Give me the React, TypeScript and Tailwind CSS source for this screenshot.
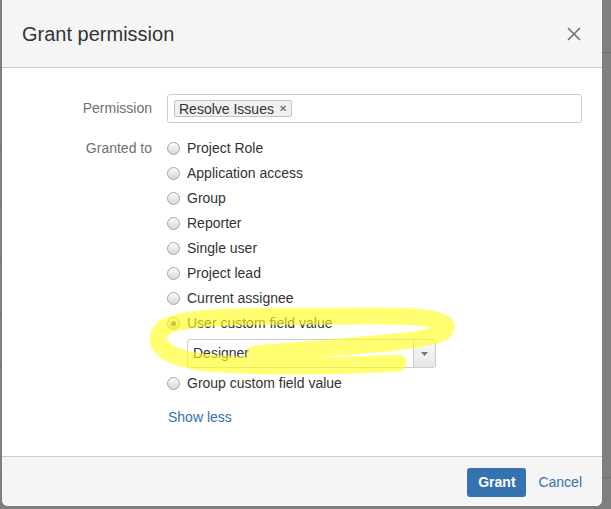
import React from 'react'

const OPTIONS = [
  'Project Role',
  'Application access',
  'Group',
  'Reporter',
  'Single user',
  'Project lead',
  'Current assignee',
]

function Radio({ checked = false }: { checked?: boolean }) {
  return (
    <span className="flex h-[13px] w-[13px] flex-shrink-0 items-center justify-center rounded-full border border-[#a6a6a6] bg-gradient-to-b from-[#fdfdfd] to-[#d6d6d6]">
      {checked ? <span className="h-[5px] w-[5px] rounded-full bg-[#6b6b6b]" /> : null}
    </span>
  )
}

function RadioRow({ label, checked }: { label: string; checked?: boolean }) {
  return (
    <label className="flex h-[25px] items-center gap-[7px] text-[14px] text-[#333]">
      <Radio checked={checked} />
      <span>{label}</span>
    </label>
  )
}

export default function App() {
  return (
    <div className="relative h-[509px] w-[611px] overflow-hidden bg-[#7f7f7f] font-['Liberation_Sans',Arial,sans-serif]">
      {/* table rows behind the backdrop */}
      {[147, 202, 257, 312, 367, 477].map((y) => (
        <div key={y} className="absolute left-0 h-px w-[2px] bg-[#6e6e6e]" style={{ top: y }} />
      ))}
      {[52, 477].map((y) => (
        <div key={y} className="absolute right-0 h-px w-[9px] bg-[#6e6e6e]" style={{ top: y }} />
      ))}

      <div className="ml-[2px] mt-[-4px] flex w-[600px] flex-col overflow-hidden rounded-md bg-white">
        {/* header */}
        <div className="flex h-[72px] items-center justify-between border-b border-[#cccccc] bg-[#f5f5f5] pl-[20px] pr-[21px] pt-[4px]">
          <h2 className="text-[20px] leading-none text-[#333]">Grant permission</h2>
          <svg width="14" height="14" viewBox="0 0 14 14" className="text-[#707070]">
            <path d="M1 1 L13 13 M13 1 L1 13" stroke="currentColor" strokeWidth="1.6" fill="none" />
          </svg>
        </div>

        {/* body */}
        <div className="flex h-[388px] flex-col px-[20px] pt-[26px] text-[14px]">
          <div className="flex items-center gap-[15px]">
            <span className="w-[130px] text-right text-[#707070]">Permission</span>
            <div className="flex h-[29px] flex-1 items-center rounded-[3px] border border-[#cccccc] px-[6px]">
              <span className="flex h-[17px] items-center gap-[5px] rounded-[2px] border border-[#c4c4c4] bg-[#f0f0f0] pl-[4px] pr-[4px] leading-none text-[#333]">
                Resolve Issues
                <span className="text-[10px] text-[#555]">✕</span>
              </span>
            </div>
          </div>

          <div className="mt-[13px] flex gap-[15px]">
            <span className="w-[130px] text-right leading-[25px] text-[#707070]">Granted to</span>
            <div className="flex flex-col">
              {OPTIONS.map((o) => (
                <RadioRow key={o} label={o} />
              ))}
              <RadioRow label="User custom field value" checked />
              <div className="ml-[20px] mt-[3px] flex h-[29px] w-[249px] overflow-hidden rounded-[3px] border border-[#cccccc]">
                <span className="flex flex-1 items-center pl-[5px] text-[#333]">Designer</span>
                <span className="flex w-[22px] items-center justify-center border-l border-[#cccccc] bg-gradient-to-b from-[#fafafa] to-[#e6e6e6]">
                  <svg width="7" height="4" viewBox="0 0 7 4">
                    <path d="M0 0 H7 L3.5 4 Z" fill="#777" />
                  </svg>
                </span>
              </div>
              <div className="mt-[3px]">
                <RadioRow label="Group custom field value" />
              </div>
              <a className="mt-[11px] block pl-px leading-[20px] text-[#3572b0]">Show less</a>
            </div>
          </div>
        </div>

        {/* footer */}
        <div className="flex h-[50px] items-center justify-end gap-[12px] border-t border-[#cccccc] bg-[#f5f5f5] pr-[20px] pt-[2px] text-[14px]">
          <button className="h-[29px] w-[59px] rounded-[3px] bg-[#3572b0] font-bold text-white">Grant</button>
          <a className="text-[#3572b0]">Cancel</a>
        </div>
      </div>

      {/* highlighter scribble */}
      <svg className="pointer-events-none absolute left-0 top-0" width="611" height="509">
        <path
          d="M255 354 C330 347 428 343 443 332 C457 320 425 315 360 316 C280 317 190 313 165 327 C150 340 158 358 210 363 C270 368 350 366 398 363"
          fill="none"
          stroke="#ffff1a"
          strokeOpacity="0.62"
          strokeWidth="17"
          strokeLinecap="round"
          strokeLinejoin="round"
        />
      </svg>
    </div>
  )
}
